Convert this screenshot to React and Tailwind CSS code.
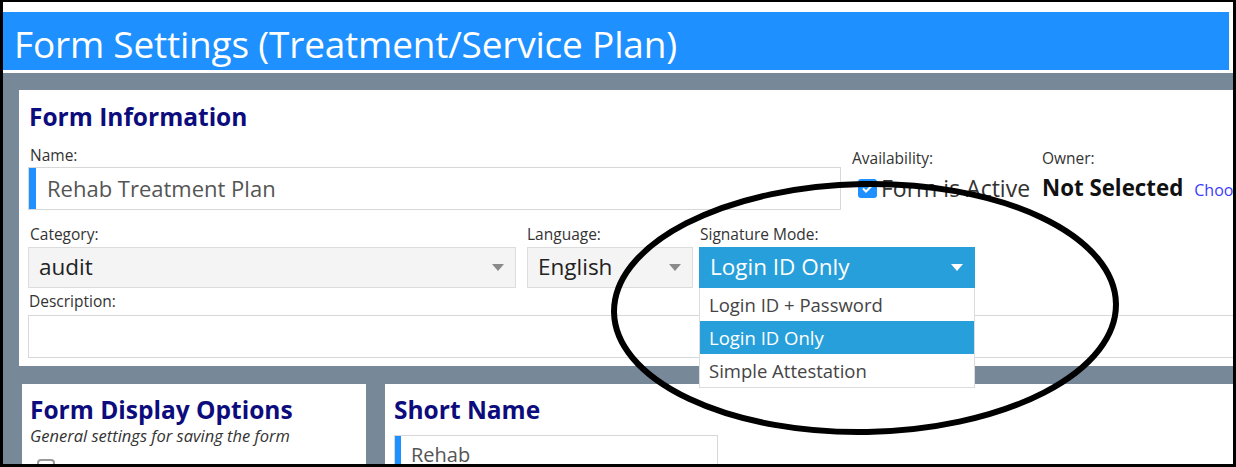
const font = { fontFamily: '"Open Sans", "Noto Sans", sans-serif' };

const Caret = ({ className }) => (
  <svg width="12" height="7" viewBox="0 0 12 7" className={className}>
    <path d="M0 0h12L6 7z" fill="currentColor" />
  </svg>
);

const Label = ({ children, className = "" }) => (
  <div className={`text-[15.5px] leading-[20px] text-[#333] whitespace-nowrap ${className}`}>{children}</div>
);

const Select = ({ value, width, active }) => (
  <div
    className={`flex items-center justify-between h-[41px] pl-[10px] pr-[11px] border ${
      active ? "bg-[#279fda] border-[#279fda] text-white" : "bg-[#f4f4f4] border-[#dcdcdc] text-[#222]"
    } ${width}`}
  >
    <span className="text-[22.5px] leading-none">{value}</span>
    <Caret className={active ? "text-white" : "text-[#8a8a8a]"} />
  </div>
);

const options = ["Login ID + Password", "Login ID Only", "Simple Attestation"];

export default function App() {
  return (
    <div
      className="relative w-[1236px] h-[467px] overflow-hidden bg-white border-black border-t-2 border-l-[3px] border-r-[3px] border-b-[3px]"
      style={font}
    >
      <div className="pt-[10px] pr-[4px]">
        <div className="h-[58px] bg-[#1e90ff] flex items-center pl-[11px] pt-[4px]">
          <h1 className="text-[37px] text-white leading-none tracking-[-0.2px] whitespace-nowrap">
            Form Settings (Treatment/Service Plan)
          </h1>
        </div>
      </div>

      <div className="mt-[3px] bg-[#778899] pl-[16px] pt-[17px] h-[400px]">
        {/* Form information card */}
        <div className="bg-white h-[276px] pl-[9px] pt-[11px]">
          <h2 className="text-[24.5px] font-bold text-[#0c0c7c] leading-[32px] pl-[1px]">Form Information</h2>

          <div className="flex mt-[12px]">
            <div className="shrink-0">
              <Label className="pl-[2px]">Name:</Label>
              <div className="mt-[2px] w-[813px] h-[43px] border border-[#d8d8d8] flex items-center">
                <div className="w-[7px] h-full bg-[#1e90ff]" />
                <span className="pl-[11px] text-[22px] text-[#555]">Rehab Treatment Plan</span>
              </div>
            </div>
            <div className="ml-[11px] pt-[3px] w-[190px] shrink-0">
              <Label>Availability:</Label>
              <div className="flex items-center mt-[6px] pl-[6px] whitespace-nowrap">
                <div className="shrink-0 w-[19px] h-[19px] rounded-[3px] bg-[#1e90ff] flex items-center justify-center">
                  <svg width="11" height="9" viewBox="0 0 11 9">
                    <path d="M1 4.5l3 3 6-6" stroke="white" strokeWidth="2" fill="none" />
                  </svg>
                </div>
                <span className="ml-[4px] text-[23px] text-[#333] leading-[28px]">Form is Active</span>
              </div>
            </div>
            <div className="pt-[3px] whitespace-nowrap">
              <Label>Owner:</Label>
              <div className="flex items-baseline mt-[6px]">
                <span className="text-[22.3px] font-bold text-[#111] leading-[28px]">Not Selected</span>
                <span className="ml-[11px] text-[16px] text-[#3b3bff]">Choose</span>
              </div>
            </div>
          </div>

          <div className="flex mt-[14px]">
            <div>
              <Label className="pl-[2px]">Category:</Label>
              <div className="mt-[3px]">
                <Select value="audit" width="w-[488px]" />
              </div>
            </div>
            <div className="ml-[11px]">
              <Label>Language:</Label>
              <div className="mt-[3px]">
                <Select value="English" width="w-[166px]" />
              </div>
            </div>
            <div className="ml-[6px] relative">
              <Label className="pl-[1px]">Signature Mode:</Label>
              <div className="mt-[3px]">
                <Select value="Login ID Only" width="w-[276px]" active />
              </div>
              {/* open option list */}
              <div className="absolute z-10 left-0 top-[64px] w-[276px] bg-white border border-[#dcdcdc] border-t-0">
                {options.map((o) => (
                  <div
                    key={o}
                    className={`h-[33px] flex items-center pl-[9px] text-[18.5px] ${
                      o === "Login ID Only" ? "bg-[#279fda] text-white" : "text-[#444]"
                    }`}
                  >
                    {o}
                  </div>
                ))}
              </div>
            </div>
          </div>

          <Label className="mt-[3px] pl-[1px]">Description:</Label>
          <div className="mt-[4px] h-[43px] border border-[#d8d8d8] border-r-0" />
        </div>

        {/* Lower cards */}
        <div className="flex mt-[18px] pl-[3px] h-[80px]">
          <div className="w-[344px] bg-white pl-[8px] pt-[10px]">
            <h2 className="text-[24.5px] font-bold text-[#0c0c7c] leading-[32px]">Form Display Options</h2>
            <div className="text-[16.5px] italic text-[#333] leading-[20px]">General settings for saving the form</div>
            <div className="mt-[13px] ml-[7px] w-[18px] h-[18px] rounded-[4px] border-2 border-[#999]" />
          </div>
          <div className="ml-[19px] flex-1 bg-white pl-[9px] pt-[10px]">
            <h2 className="text-[24.5px] font-bold text-[#0c0c7c] leading-[32px]">Short Name</h2>
            <div className="mt-[9px] w-[324px] h-[40px] border border-[#d8d8d8] flex items-center">
              <div className="w-[6px] h-full bg-[#1e90ff]" />
              <span className="pl-[10px] text-[20px] text-[#555]">Rehab</span>
            </div>
          </div>
        </div>
      </div>

      {/* hand-drawn ring around the signature field */}
      <svg className="absolute left-[-3px] top-[-2px] pointer-events-none z-20" width="1236" height="467">
        <ellipse
          cx="865"
          cy="308"
          rx="251"
          ry="124"
          transform="rotate(-1 865 308)"
          fill="none"
          stroke="black"
          strokeWidth="6"
        />
      </svg>
    </div>
  );
}
